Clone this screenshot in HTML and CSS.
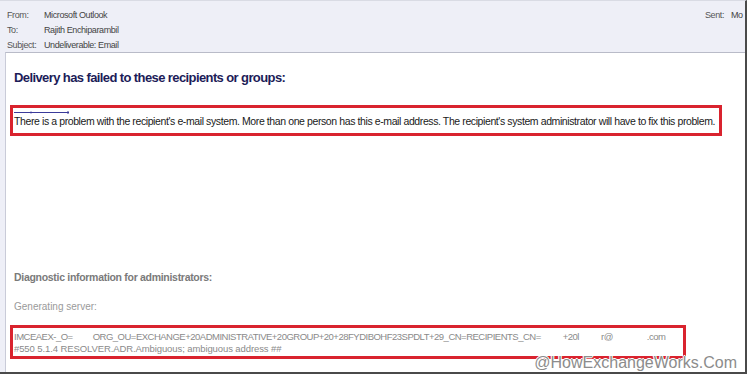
FILE: index.html
```html
<!DOCTYPE html>
<html>
<head>
<meta charset="utf-8">
<link rel="stylesheet" href="styles.css">
</head>
<body>
<div class="window">
  <div class="header">
    <div class="row">
      <div class="fields">
        <span class="label">From:</span><span class="value">Microsoft Outlook</span>
        <span class="label">To:</span><span class="value">Rajith Enchiparambil</span>
        <span class="label">Subject:</span><span class="value">Undeliverable: Email</span>
      </div>
      <div class="sent"><span class="sent-label">Sent:</span><span class="value">Mo</span></div>
    </div>
  </div>
  <div class="content">
    <h1 class="title">Delivery has failed to these recipients or groups:</h1>
    <div class="redbox box1">
      <svg class="uline" width="56" height="3" viewBox="0 0 56 3"><line x1="0" y1="1.5" x2="55" y2="1.5" stroke="#3b3b9a" stroke-width="1"/><line x1="17" y1="0.5" x2="17" y2="2.5" stroke="#3b3b9a" stroke-width="1"/><line x1="54" y1="0" x2="54" y2="3" stroke="#3b3b9a" stroke-width="1"/></svg>
      <p class="msg">There is a problem with the recipient's e-mail system. More than one person has this e-mail address. The recipient's system administrator will have to fix this problem.</p>
    </div>
    <h2 class="diag">Diagnostic information for administrators:</h2>
    <p class="gen">Generating server:</p>
    <div class="redbox box2">
      <p class="code line1"><span>IMCEAEX-_O=</span><span class="g1">ORG_OU=EXCHANGE+20ADMINISTRATIVE+20GROUP+20+28FYDIBOHF23SPDLT+29_CN=RECIPIENTS_CN=</span><span class="g2">+20l</span><span class="g3">r@</span><span class="g4">.com</span></p>
      <p class="code line2">#550 5.1.4 RESOLVER.ADR.Ambiguous; ambiguous address ##</p>
    </div>
  </div>
  <div class="watermark">@HowExchangeWorks.Com</div>
</div>
</body>
</html>
```
FILE: styles.css
```css
html, body {
  margin: 0;
  padding: 0;
  background: #ffffff;
}
body {
  width: 749px;
  height: 378px;
  overflow: hidden;
  font-family: "Liberation Sans", Arial, sans-serif;
}
.window {
  position: relative;
  box-sizing: border-box;
  width: 747px;
  height: 374px;
  background: #eeeff7;
  border-top: 1px solid #d9dbe4;
  border-right: 2px solid #4a4a4a;
  border-bottom: 2px solid #4a4a4a;
  display: flex;
  flex-direction: column;
  overflow: hidden;
}
.header {
  height: 51px;
  padding-top: 7px;
  box-sizing: border-box;
  font-size: 9px;
  letter-spacing: -0.4px;
  color: #555;
}
.row {
  display: flex;
}
.fields {
  flex: 1;
  display: grid;
  grid-template-columns: 37px auto;
  grid-auto-rows: 15px;
  line-height: 15px;
  padding-left: 7px;
}
.value {
  color: #444;
  white-space: nowrap;
}
.sent {
  width: 40px;
  flex: none;
  white-space: nowrap;
  line-height: 15px;
  display: flex;
}
.sent-label {
  width: 26px;
  flex: none;
}
.content {
  flex: 1;
  margin-left: 5px;
  background: #ffffff;
  border-left: 1px solid #c9cbd8;
  border-top: 1px solid #b9bbc8;
  display: flex;
  flex-direction: column;
  align-items: flex-start;
}
.title {
  margin: 17px 0 0 8px;
  font-size: 13px;
  line-height: 16px;
  letter-spacing: -0.6px;
  font-weight: bold;
  color: #1c1c58;
}
.redbox {
  box-sizing: border-box;
  margin-left: 4px;
  border: 3px solid #d9232e;
}
.box1 {
  width: 712px;
  margin-top: 19px;
  padding: 3px 0 5px 1px;
}
.uline {
  display: block;
}
.msg {
  margin: 0;
  font-size: 10.5px;
  line-height: 14px;
  letter-spacing: -0.4px;
  color: #1a1a1a;
  white-space: nowrap;
}
.diag {
  margin: 134px 0 0 8px;
  font-size: 10.5px;
  line-height: 14px;
  letter-spacing: -0.3px;
  font-weight: bold;
  color: #7a7a7a;
}
.gen {
  margin: 16px 0 0 8px;
  font-size: 10px;
  line-height: 14px;
  letter-spacing: 0;
  color: #9a9a9a;
}
.box2 {
  width: 676px;
  margin-top: 11px;
  padding: 3px 0 1px 1px;
}
.code {
  margin: 0;
  font-size: 9.5px;
  line-height: 12px;
  color: #8a8a8a;
  white-space: nowrap;
}
.line1 { letter-spacing: -0.5px; }
.line2 { letter-spacing: -0.1px; }
.g1 { margin-left: 20px; }
.g2 { margin-left: 22px; }
.g3 { margin-left: 22px; }
.g4 { margin-left: 34px; }
.watermark {
  position: absolute;
  right: 8px;
  top: 353px;
  font-size: 16px;
  line-height: 18px;
  color: #8c8c8c;
  text-shadow: 1px 0 0 #fff, -1px 0 0 #fff, 0 1px 0 #fff, 0 -1px 0 #fff;
}
```
